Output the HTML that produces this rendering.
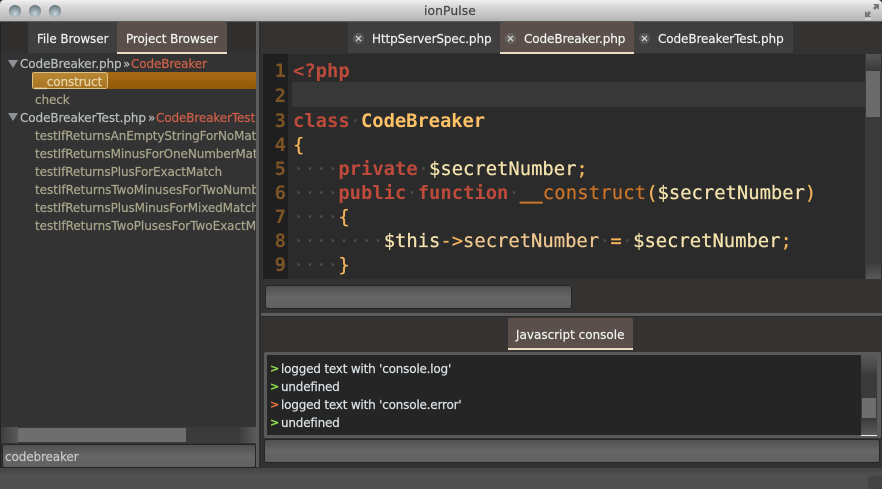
<!DOCTYPE html>
<html><head><meta charset="utf-8">
<style>
html,body{margin:0;padding:0;background:#333;}
#w{position:relative;width:882px;height:489px;overflow:hidden;background:#353331;font-family:"DejaVu Sans","Liberation Sans",sans-serif;}
.a{position:absolute;}
.t{position:absolute;white-space:nowrap;font-size:12px;line-height:18px;-webkit-text-stroke:.2px currentColor;}
.tab{position:absolute;background:#403f3f;}
.on{background:#5a4f4b;border-bottom:2px solid #ecdcc8;box-sizing:border-box;border-radius:2px 2px 0 0;}
.x{position:absolute;width:11px;height:11px;}
.f{color:#a9a68c;}
.h{color:#b9c0c0;}
.r{color:#d0604a;}
.ln{position:absolute;left:262px;width:24px;text-align:right;color:#7c5425;font:bold 18.83px/24px "DejaVu Sans Mono",monospace;}
.c{position:absolute;left:293px;white-space:pre;font:18.83px/24px "DejaVu Sans Mono",monospace;color:#f5e3ae;-webkit-text-stroke:.25px currentColor;}
.k{color:#bd4a3a;font-weight:bold;-webkit-text-stroke:0;}
.o{color:#f5b45c;}
.d{color:#4c4c4c;-webkit-text-stroke:0;}
.cn{color:#ffc266;font-weight:bold;-webkit-text-stroke:0;letter-spacing:-.06px;}
.fn{color:#cd7428;letter-spacing:.16px;}
.inp{position:absolute;box-sizing:border-box;border:1px solid #252525;border-radius:3px;background:linear-gradient(#505050,#666 50%,#606060);}
.con{color:#dce4e8;font-size:12px;}
.lbl{letter-spacing:-.1px;}
</style></head><body><div id="w">

<!-- title bar -->
<div class="a" style="left:0;top:0;width:882px;height:22px;background:linear-gradient(#f0f0f0,#dcdcdc 25%,#b4b4b4);border-bottom:1px solid #5a5a5a;box-sizing:border-box;border-radius:4px 4px 0 0"></div>
<div class="a" style="left:9px;top:5px;width:12px;height:12px;border-radius:50%;background:radial-gradient(circle at 50% 75%,#c8d6dc,#75838b 70%,#4a555b)"></div>
<div class="a" style="left:29px;top:5px;width:12px;height:12px;border-radius:50%;background:radial-gradient(circle at 50% 75%,#c8d6dc,#75838b 70%,#4a555b)"></div>
<div class="a" style="left:49px;top:5px;width:12px;height:12px;border-radius:50%;background:radial-gradient(circle at 50% 75%,#c8d6dc,#75838b 70%,#4a555b)"></div>
<div class="t" style="left:424px;top:2px;color:#444;font-size:12.3px;letter-spacing:.1px">ionPulse</div>
<svg class="a" style="left:864px;top:3px" width="16" height="17" viewBox="0 0 16 17"><path d="M9 1h6v6l-2-2-2 2-2-2 2-2zM1 8l2 2 2-2 2 2-2 2 2 2H1z" fill="#777"/><path d="M1 16h6" stroke="#eee" stroke-width="1"/></svg>

<!-- left pane -->
<div class="a" style="left:1px;top:22px;width:255px;height:31px;background:#302f2e"></div>
<div class="a" style="left:1px;top:53px;width:255px;height:375px;background:#333"></div>
<div class="a" style="left:0;top:22px;width:1px;height:467px;background:#222"></div>
<div class="a" style="left:256px;top:22px;width:3px;height:445px;background:#5c5c5c"></div>
<div class="a" style="left:259px;top:22px;width:2px;height:445px;background:#2e2e2e"></div>

<div class="tab" style="left:28px;top:22px;width:89px;height:31px"></div>
<div class="tab on" style="left:117px;top:22px;width:110px;height:32px"></div>
<div class="t lbl" style="left:37px;top:30px;color:#f0f0f0">File Browser</div>
<div class="t lbl" style="left:126px;top:30px;color:#f4f4f4">Project Browser</div>

<div class="a" style="left:1px;top:54px;width:255px;height:180px;overflow:hidden">
  <div class="a" style="left:31px;top:18px;width:224px;height:17px;background:linear-gradient(#a86a14,#955a08)"></div>
  <div class="a" style="left:31px;top:18px;width:76px;height:17px;box-sizing:border-box;border:1px solid #dcc08a;border-radius:3px;background:linear-gradient(#b98733,#a87420)"></div>
  <svg class="a" style="left:6px;top:5px" width="12" height="10"><path d="M1 1h10L6 9z" fill="#8e9296"/></svg>
  <svg class="a" style="left:6px;top:58px" width="12" height="10"><path d="M1 1h10L6 9z" fill="#8e9296"/></svg>
  <div class="t h" style="left:19px;top:1px;letter-spacing:-.08px">CodeBreaker.php</div>
  <div class="t h" style="left:122px;top:1px">»</div>
  <div class="t r" style="left:130px;top:1px;letter-spacing:-.12px">CodeBreaker</div>
  <div class="t" style="left:34px;top:19px;color:#e8d8ae;letter-spacing:-.12px"><b>__</b>construct</div>
  <div class="t f" style="left:34px;top:37px;letter-spacing:-.12px">check</div>
  <div class="t h" style="left:19px;top:55px;letter-spacing:-.08px">CodeBreakerTest.php</div>
  <div class="t h" style="left:147px;top:55px">»</div>
  <div class="t r" style="left:155px;top:55px;letter-spacing:-.12px">CodeBreakerTest</div>
  <div class="t f" style="left:34px;top:73px;letter-spacing:-.1px">testIfReturnsAnEmptyStringForNoMatch</div>
  <div class="t f" style="left:34px;top:91px;letter-spacing:-.1px">testIfReturnsMinusForOneNumberMatch</div>
  <div class="t f" style="left:34px;top:109px;letter-spacing:-.1px">testIfReturnsPlusForExactMatch</div>
  <div class="t f" style="left:34px;top:127px;letter-spacing:-.04px">testIfReturnsTwoMinusesForTwoNumberMatch</div>
  <div class="t f" style="left:34px;top:145px;letter-spacing:-.1px">testIfReturnsPlusMinusForMixedMatch</div>
  <div class="t f" style="left:34px;top:163px;letter-spacing:-.04px">testIfReturnsTwoPlusesForTwoExactMatches</div>
</div>

<!-- left scrollbar -->
<div class="a" style="left:1px;top:427px;width:255px;height:16px;background:#3a3a3a"></div>
<div class="a" style="left:1px;top:427px;width:17px;height:16px;background:linear-gradient(90deg,#3e3e3e,#5a5a5a)"></div>
<div class="a" style="left:18px;top:428px;width:168px;height:14px;background:#6e6e6e"></div>
<div class="a" style="left:240px;top:427px;width:16px;height:16px;background:linear-gradient(90deg,#3e3e3e,#5a5a5a)"></div>
<div class="inp" style="left:2px;top:444px;width:254px;height:24px"></div>
<div class="t" style="left:5px;top:448px;color:#c8c8c8;letter-spacing:-.12px">codebreaker</div>

<!-- editor tabs -->
<div class="tab" style="left:348px;top:22px;width:152px;height:31px"></div>
<div class="tab on" style="left:500px;top:22px;width:134px;height:32px"></div>
<div class="tab" style="left:634px;top:22px;width:159px;height:31px"></div>
<svg class="x" style="left:353px;top:33px" viewBox="0 0 11 11"><circle cx="5.5" cy="5.5" r="5.5" fill="#585858"/><path d="M3 3l5 5M8 3l-5 5" stroke="#ddd" stroke-width="1.2"/></svg>
<svg class="x" style="left:505px;top:33px" viewBox="0 0 11 11"><circle cx="5.5" cy="5.5" r="5.5" fill="#6a6462"/><path d="M3 3l5 5M8 3l-5 5" stroke="#ddd" stroke-width="1.2"/></svg>
<svg class="x" style="left:639px;top:33px" viewBox="0 0 11 11"><circle cx="5.5" cy="5.5" r="5.5" fill="#585858"/><path d="M3 3l5 5M8 3l-5 5" stroke="#ddd" stroke-width="1.2"/></svg>
<div class="t lbl" style="left:372px;top:30px;color:#eef2f4">HttpServerSpec.php</div>
<div class="t lbl" style="left:524px;top:30px;color:#f4f4f4">CodeBreaker.php</div>
<div class="t lbl" style="left:658px;top:30px;color:#eef2f4">CodeBreakerTest.php</div>

<!-- editor -->
<div class="a" style="left:263px;top:54px;width:603px;height:225px;background:#2b2b2b"></div>
<div class="a" style="left:263px;top:54px;width:25px;height:225px;background:#1f1f1f"></div>
<div class="a" style="left:292px;top:82px;width:574px;height:25px;background:#383838"></div>
<div class="a" style="left:865px;top:54px;width:16px;height:225px;background:#3a3a3a"></div>
<div class="a" style="left:866px;top:54px;width:15px;height:16px;background:linear-gradient(#555,#3c3c3c)"></div>
<div class="a" style="left:866px;top:71px;width:14px;height:46px;background:#6a6a6a"></div>
<div class="a" style="left:866px;top:263px;width:15px;height:16px;background:linear-gradient(#3c3c3c,#595959)"></div>

<div class="ln" style="top:60px">1</div>
<div class="ln" style="top:85px">2</div>
<div class="ln" style="top:110px">3</div>
<div class="ln" style="top:134px">4</div>
<div class="ln" style="top:158px">5</div>
<div class="ln" style="top:182px">6</div>
<div class="ln" style="top:206px">7</div>
<div class="ln" style="top:230px">8</div>
<div class="ln" style="top:254px">9</div>

<div class="c" style="top:60px"><span class="k">&lt;?php</span></div>
<div class="c" style="top:110px"><span class="k">class</span><span class="d">·</span><span class="cn">CodeBreaker</span></div>
<div class="c o" style="top:134px">{</div>
<div class="c" style="top:158px"><span class="d">····</span><span class="k">private</span><span class="d">·</span>$secretNumber<span class="o">;</span></div>
<div class="c" style="top:182px"><span class="d">····</span><span class="k">public</span><span class="d">·</span><span class="k">function</span><span class="d">·</span><span class="fn"><b>__</b>construct</span><span class="o">(</span>$secretNumber<span class="o">)</span></div>
<div class="c" style="top:206px"><span class="d">····</span><span class="o">{</span></div>
<div class="c" style="top:230px"><span class="d">········</span>$this<span class="o">-&gt;</span><span style="color:#f0c890">secretNumber</span><span class="d">·</span><span class="o">=</span><span class="d">·</span>$secretNumber<span class="o">;</span></div>
<div class="c" style="top:254px"><span class="d">····</span><span class="o">}</span></div>

<div class="inp" style="left:265px;top:285px;width:307px;height:24px"></div>

<!-- splitter -->
<div class="a" style="left:261px;top:313px;width:621px;height:3px;background:#5c5c5c"></div>
<div class="a" style="left:261px;top:316px;width:621px;height:1px;background:#2a2a2a"></div>

<!-- console -->
<div class="tab on" style="left:508px;top:318px;width:125px;height:32px"></div>
<div class="t" style="left:516px;top:326px;color:#f4f4f4">Javascript console</div>
<div class="a" style="left:264px;top:352px;width:617px;height:86px;background:#5a5a5a;border-radius:2px"></div>
<div class="a" style="left:267px;top:355px;width:594px;height:80px;background:#252525;overflow:hidden"></div>
<div class="a" style="left:861px;top:355px;width:16px;height:80px;background:#3a3a3a"></div>
<div class="a" style="left:861px;top:355px;width:16px;height:18px;background:linear-gradient(#5a5a5a,#404040)"></div>
<div class="a" style="left:862px;top:398px;width:14px;height:20px;background:#6e6e6e"></div>
<div class="a" style="left:861px;top:419px;width:16px;height:16px;background:linear-gradient(#3c3c3c,#5a5a5a)"></div>
<div class="a" style="left:861px;top:435px;width:16px;height:1px;background:#eee"></div>

<div class="t con" style="left:270px;top:360px;color:#8fdc50;font-weight:bold;font-size:11px">&gt;</div>
<div class="t con" style="left:281px;top:360px;letter-spacing:-.2px">logged text with 'console.log'</div>
<div class="t con" style="left:270px;top:378px;color:#8fdc50;font-weight:bold;font-size:11px">&gt;</div>
<div class="t con" style="left:281px;top:378px;letter-spacing:-.2px">undefined</div>
<div class="t con" style="left:270px;top:396px;color:#e8743a;font-weight:bold;font-size:11px">&gt;</div>
<div class="t con" style="left:281px;top:396px;letter-spacing:-.2px">logged text with 'console.error'</div>
<div class="t con" style="left:270px;top:414px;color:#8fdc50;font-weight:bold;font-size:11px">&gt;</div>
<div class="t con" style="left:281px;top:414px;letter-spacing:-.2px">undefined</div>

<div class="inp" style="left:264px;top:439px;width:616px;height:24px"></div>

<!-- bottom status bar -->
<div class="a" style="left:0;top:468px;width:882px;height:21px;background:linear-gradient(#454545,#505050 40%,#4e4e4e)"></div>
<div class="a" style="left:868px;top:476px;width:14px;height:13px;background:#444;border-radius:3px 0 0 0"></div>
</div></body></html>
